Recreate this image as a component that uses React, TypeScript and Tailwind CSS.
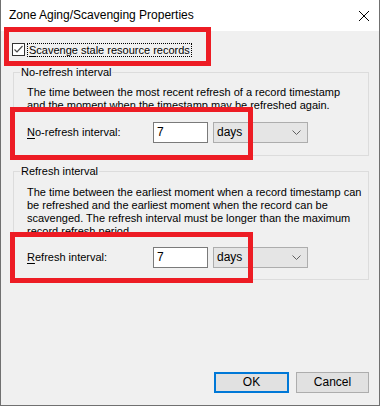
import React from 'react';

const font = "font-['Liberation_Sans',Arial,sans-serif]";

function Chevron() {
  return (
    <svg width="9" height="5" viewBox="0 0 9 5" className="shrink-0">
      <path d="M0.5 0.5 L4.5 4.5 L8.5 0.5" fill="none" stroke="#606060" strokeWidth="1" />
    </svg>
  );
}

function IntervalRow({ label, accel }: { label: string; accel: string }) {
  return (
    <div className="flex items-center h-[21px]">
      <span className="w-[126px] shrink-0">
        <span className="underline underline-offset-2">{accel}</span>
        {label}
      </span>
      <div className="w-[55px] h-[21px] bg-white border border-[#7a7a7a] flex items-center pl-[3px] text-[12px]">7</div>
      <div className="ml-[5px] w-[95px] h-[21px] bg-[#e5e5e5] border border-[#adadad] flex items-center justify-between pl-[3px] pr-[6px] text-[12px]">
        <span>days</span>
        <Chevron />
      </div>
    </div>
  );
}

function GroupBox({ title, height, children }: { title: string; height: string; children: React.ReactNode }) {
  return (
    <div className={`relative ml-[12px] w-[356px] ${height} border border-[#dcdcdc]`}>
      <span className="absolute left-[6px] -top-[7px] bg-[#f0f0f0] px-[1px] leading-[13px]">{title}</span>
      {children}
    </div>
  );
}

export default function App() {
  return (
    <div className={`relative w-[380px] h-[406px] bg-[#f0f0f0] border border-t-0 border-[#707070] flex flex-col text-[11px] leading-[13px] text-black ${font}`}>
      {/* Title bar */}
      <div className="h-[31px] bg-white flex items-center justify-between pl-[8px] pr-[10px] shrink-0">
        <span className="text-[12px]">Zone Aging/Scavenging Properties</span>
        <svg width="10" height="10" viewBox="0 0 10 10">
          <path d="M0 0 L10 10 M10 0 L0 10" stroke="#000" strokeWidth="1" />
        </svg>
      </div>

      {/* Scavenge checkbox */}
      <div className="flex items-center mt-[12px] ml-[11px] h-[13px]">
        <div className="w-[13px] h-[13px] border border-[#333] bg-white flex items-center justify-center">
          <svg width="11" height="11" viewBox="0 0 11 11">
            <path d="M1.5 5.5 L4 8 L9.5 2" fill="none" stroke="#4a4a4a" strokeWidth="1.2" />
          </svg>
        </div>
        <span className="ml-[2px] px-[1px] border border-dotted border-black leading-[12px] whitespace-nowrap">
          <span className="underline underline-offset-2">S</span>cavenge stale resource records
        </span>
      </div>

      {/* No-refresh group */}
      <div className="mt-[16px]">
        <GroupBox title="No-refresh interval" height="h-[84px]">
          <div className="pl-[13px] pt-[13px]">
            <p className="whitespace-nowrap">
              The time between the most recent refresh of a record timestamp
              <br />
              and the moment when the timestamp may be refreshed again.
            </p>
            <div className="mt-[10px]">
              <IntervalRow accel="N" label="o-refresh interval:" />
            </div>
          </div>
        </GroupBox>
      </div>

      {/* Refresh group */}
      <div className="mt-[15px]">
        <GroupBox title="Refresh interval" height="h-[109px]">
          <div className="pl-[13px] pt-[14px]">
            <p className="whitespace-nowrap">
              The time between the earliest moment when a record timestamp can
              <br />
              be refreshed and the earliest moment when the record can be
              <br />
              scavenged. The refresh interval must be longer than the maximum
              <br />
              record refresh period.
            </p>
            <div className="mt-[9px]">
              <IntervalRow accel="R" label="efresh interval:" />
            </div>
          </div>
        </GroupBox>
      </div>

      {/* Buttons */}
      <div className="mt-auto mb-[12px] flex justify-end pr-[10px] gap-[7px] text-[12px]">
        <button className="w-[75px] h-[21px] bg-[#e1e1e1] border-2 border-[#0078d7] flex items-center justify-center">OK</button>
        <button className="w-[73px] h-[21px] bg-[#e1e1e1] border border-[#adadad] flex items-center justify-center">Cancel</button>
      </div>

      {/* Red annotation boxes */}
      <div className="absolute left-[3px] top-[27px] w-[207px] h-[39px] border-[5px] border-[#ed1c24]" />
      <div className="absolute left-[9px] top-[107px] w-[243px] h-[53px] border-[5px] border-[#ed1c24]" />
      <div className="absolute left-[9px] top-[232px] w-[243px] h-[51px] border-[5px] border-[#ed1c24]" />
    </div>
  );
}
